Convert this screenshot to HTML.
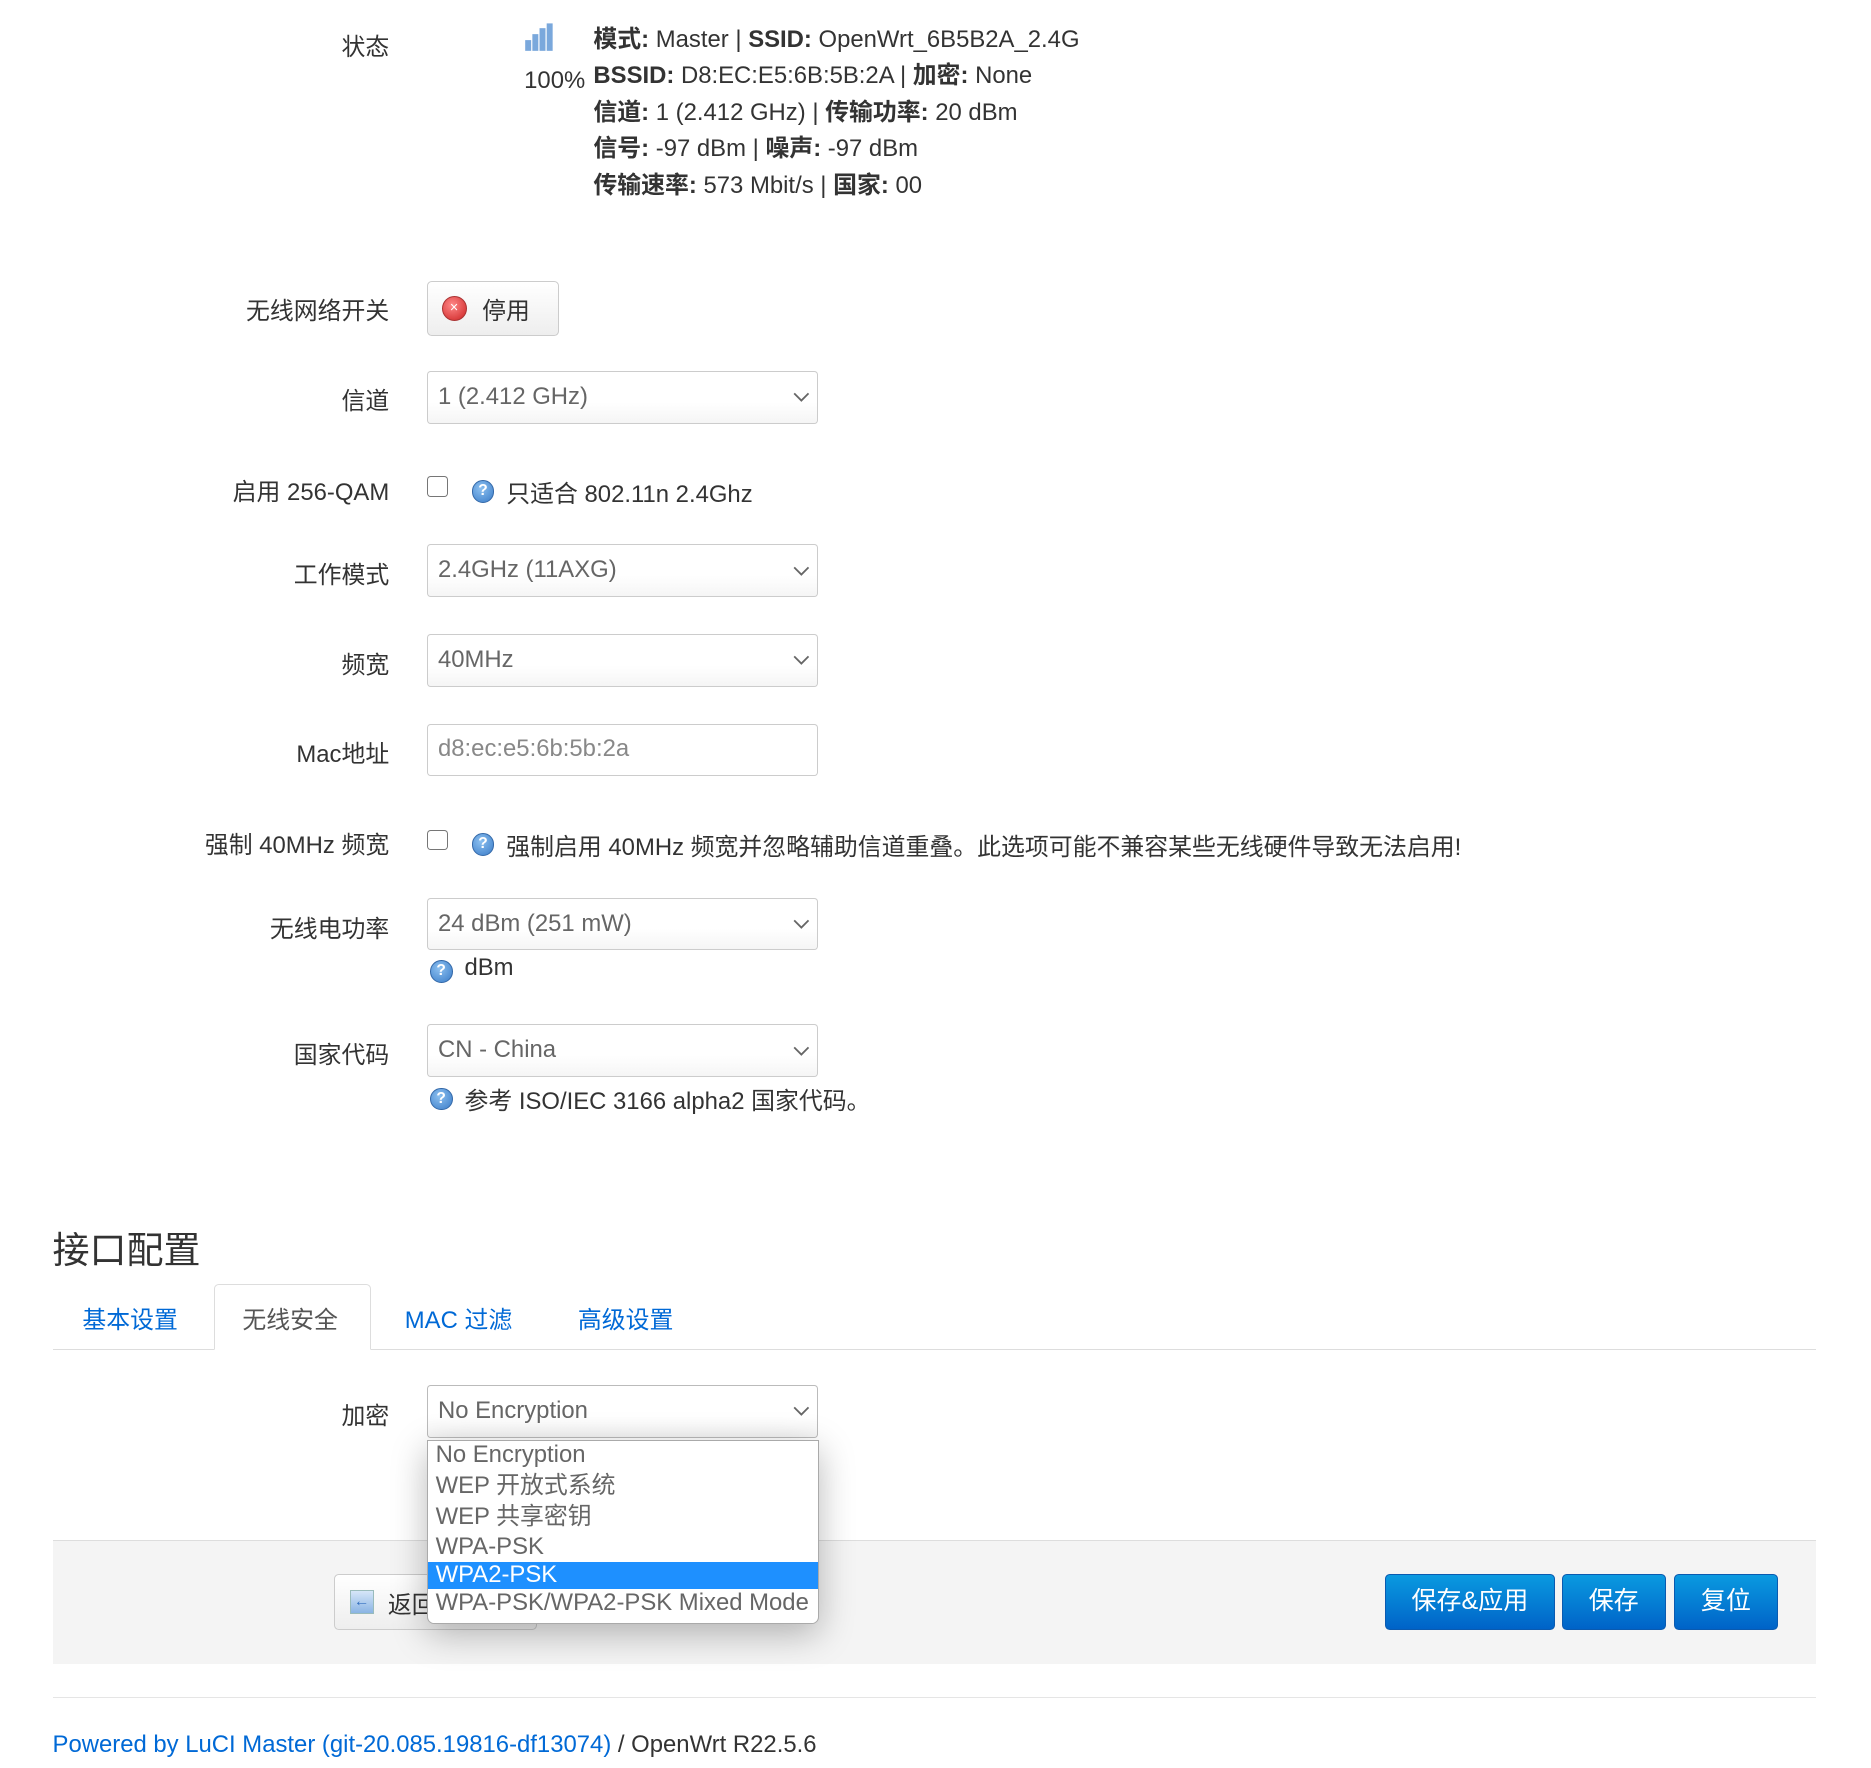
<!DOCTYPE html>
<html><head><meta charset="utf-8">
<style>
html,body{margin:0;padding:0;background:#fff;}
body{zoom:1.194;width:1567px;height:1481px;position:relative;overflow:hidden;
font-family:"Liberation Sans","Noto Sans CJK SC",sans-serif;color:#333;font-size:20px;}
.a{position:absolute;white-space:nowrap;}
.t{margin-top:-2px;}
.lbl{position:absolute;right:1241px;white-space:nowrap;color:#333;margin-top:-2px;}
.sel{position:absolute;left:358px;width:327px;height:44px;border:1px solid #ccc;border-radius:3px;
background:linear-gradient(#fff,#fff 60%,#f5f5f5);color:#666;box-sizing:border-box;}
.sel span{position:absolute;left:8px;top:9px;}
.sel svg{position:absolute;right:6px;top:16px;}
.cb{position:absolute;left:358px;width:17px;height:17px;border:1.5px solid #767676;border-radius:3px;box-sizing:border-box;background:#fff;}
.help{position:absolute;width:19px;height:19px;border-radius:50%;background:radial-gradient(circle at 40% 35%,#8cc0f0,#3a7cc8);border:1px solid #3368a8;box-sizing:border-box;color:#fff;font-size:13px;font-weight:bold;text-align:center;line-height:17px;}
b{font-weight:bold;}
.st div{height:30.6px;}
.btnb{position:absolute;top:1318px;height:47px;border-radius:4px;background:linear-gradient(#0a9ae0,#0063c8);color:#fff;text-align:center;line-height:45px;font-size:21px;border:1px solid #0a5ab0;box-sizing:border-box;}
</style></head><body>

<div class="lbl" style="top:25px">状态</div>
<svg class="a" style="left:439px;top:18px" width="26" height="26"><g fill="#7aa8dc"><rect x="1" y="16" width="5" height="9"/><rect x="7" y="11" width="5" height="14"/><rect x="13" y="6" width="5" height="19"/><rect x="19" y="2" width="5" height="23"/></g></svg>
<div class="a t" style="left:439px;top:58px">100%</div>
<div class="a st t" style="left:497px;top:20px;line-height:30.6px">
<div><b>模式:</b> Master | <b>SSID:</b> OpenWrt_6B5B2A_2.4G</div>
<div><b>BSSID:</b> D8:EC:E5:6B:5B:2A | <b>加密:</b> None</div>
<div><b>信道:</b> 1 (2.412 GHz) | <b>传输功率:</b> 20 dBm</div>
<div><b>信号:</b> -97 dBm | <b>噪声:</b> -97 dBm</div>
<div><b>传输速率:</b> 573 Mbit/s | <b>国家:</b> 00</div>
</div>

<div class="lbl" style="top:246px">无线网络开关</div>
<div class="a" style="left:358px;top:235px;width:110px;height:46px;border:1px solid #ccc;border-radius:4px;background:linear-gradient(#fff,#eee);box-sizing:border-box;">
<div class="a" style="left:11px;top:12px;width:21px;height:21px;border-radius:50%;background:radial-gradient(circle at 40% 35%,#f88,#c22);border:1px solid #a33;box-sizing:border-box;color:#fff;font-size:12px;text-align:center;line-height:19px">×</div>
<div class="a" style="left:45px;top:8px;color:#333">停用</div></div>

<div class="lbl" style="top:321px">信道</div>
<div class="sel" style="top:311px"><span>1 (2.412 GHz)</span><svg width="14" height="10"><path d="M1 2l6 6 6-6" fill="none" stroke="#666" stroke-width="1.5"/></svg></div>

<div class="lbl" style="top:397px">启用 256-QAM</div>
<div class="cb" style="top:399px"></div>
<div class="help" style="left:395px;top:402px">?</div>
<div class="a t" style="left:424px;top:399px">只适合 802.11n 2.4Ghz</div>

<div class="lbl" style="top:467px">工作模式</div>
<div class="sel" style="top:456px"><span>2.4GHz (11AXG)</span><svg width="14" height="10"><path d="M1 2l6 6 6-6" fill="none" stroke="#666" stroke-width="1.5"/></svg></div>

<div class="lbl" style="top:542px">频宽</div>
<div class="sel" style="top:531px"><span>40MHz</span><svg width="14" height="10"><path d="M1 2l6 6 6-6" fill="none" stroke="#666" stroke-width="1.5"/></svg></div>

<div class="lbl" style="top:617px">Mac地址</div>
<div class="sel" style="top:606px;background:#fff"><span style="color:#888">d8:ec:e5:6b:5b:2a</span></div>

<div class="lbl" style="top:693px">强制 40MHz 频宽</div>
<div class="cb" style="top:695px"></div>
<div class="help" style="left:395px;top:698px">?</div>
<div class="a t" style="left:424px;top:695px">强制启用 40MHz 频宽并忽略辅助信道重叠。此选项可能不兼容某些无线硬件导致无法启用!</div>

<div class="lbl" style="top:763px">无线电功率</div>
<div class="sel" style="top:752px"><span>24 dBm (251 mW)</span><svg width="14" height="10"><path d="M1 2l6 6 6-6" fill="none" stroke="#666" stroke-width="1.5"/></svg></div>
<div class="help" style="left:360px;top:804px">?</div>
<div class="a t" style="left:389px;top:801px">dBm</div>

<div class="lbl" style="top:869px">国家代码</div>
<div class="sel" style="top:858px"><span>CN - China</span><svg width="14" height="10"><path d="M1 2l6 6 6-6" fill="none" stroke="#666" stroke-width="1.5"/></svg></div>
<div class="help" style="left:360px;top:911px">?</div>
<div class="a t" style="left:389px;top:907px">参考 ISO/IEC 3166 alpha2 国家代码。</div>

<div class="a" style="left:44px;top:1022px;font-size:31px;color:#333">接口配置</div>
<div class="a" style="left:44px;top:1130px;width:1477px;height:1px;background:#ddd"></div>
<div class="a" style="left:179px;top:1075px;width:132px;height:56px;border:1px solid #ddd;border-bottom:1px solid #fff;border-radius:4px 4px 0 0;background:#fff;box-sizing:border-box"></div>
<div class="a t" style="left:69px;top:1091px;color:#0069d6">基本设置</div>
<div class="a t" style="left:203px;top:1091px;color:#555">无线安全</div>
<div class="a t" style="left:339px;top:1091px;color:#0069d6">MAC 过滤</div>
<div class="a t" style="left:484px;top:1091px;color:#0069d6">高级设置</div>

<div class="a" style="left:44px;top:1290px;width:1477px;height:103px;background:#f4f4f4;border-top:1px solid #ddd"></div>
<div class="a" style="left:280px;top:1318px;width:170px;height:47px;border:1px solid #ccc;border-radius:4px;background:linear-gradient(#fff,#eee);box-sizing:border-box">
<div class="a" style="left:12px;top:13px;width:20px;height:20px;background:linear-gradient(#d6e6f8,#8ab4e4);border:1px solid #9bb;box-sizing:border-box;color:#3470c0;font-size:13px;text-align:center;line-height:18px">←</div>
<div class="a" style="left:44px;top:9px;color:#333">返回</div></div>
<div class="btnb" style="left:1160px;width:142px">保存&amp;应用</div>
<div class="btnb" style="left:1308px;width:87px">保存</div>
<div class="btnb" style="left:1402px;width:87px">复位</div>

<div class="lbl" style="top:1171px">加密</div>
<div class="sel" style="top:1160px;border-color:#bbb"><span>No Encryption</span><svg width="14" height="10"><path d="M1 2l6 6 6-6" fill="none" stroke="#666" stroke-width="1.5"/></svg></div>
<div class="a" style="left:358px;top:1206px;width:328px;height:154px;background:#fff;border:1px solid #aaa;border-radius:0 0 6px 6px;box-shadow:0 8px 30px rgba(0,0,0,0.28);box-sizing:border-box;color:#666;font-size:20px;line-height:24px;overflow:hidden">
<div style="padding-left:6px;height:26px">No Encryption</div>
<div style="padding-left:6px;height:26px">WEP 开放式系统</div>
<div style="padding-left:6px;height:25px">WEP 共享密钥</div>
<div style="padding-left:6px;height:24px">WPA-PSK</div>
<div style="padding-left:6px;height:23px;background:#1e90ff;color:#fff;line-height:22px">WPA2-PSK</div>
<div style="padding-left:6px;height:26px">WPA-PSK/WPA2-PSK Mixed Mode</div>
</div>

<div class="a" style="left:44px;top:1421px;width:1477px;height:1px;background:#e5e5e5"></div>
<div class="a t" style="left:44px;top:1452px"><span style="color:#0069d6">Powered by LuCI Master (git-20.085.19816-df13074)</span> / OpenWrt R22.5.6</div>
</body></html>
